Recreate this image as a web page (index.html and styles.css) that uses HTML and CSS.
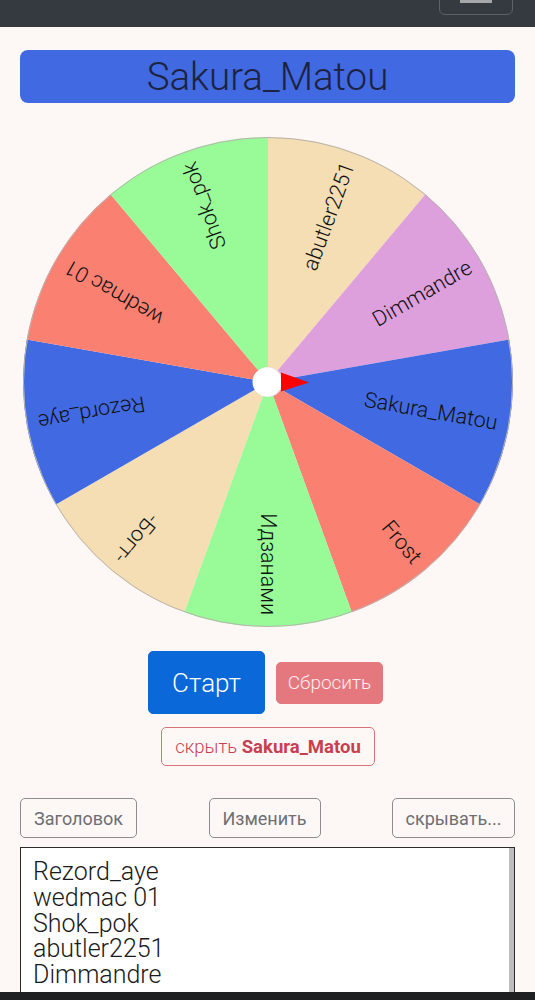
FILE: index.html
```html
<!DOCTYPE html>
<html lang="ru">
<head>
<meta charset="utf-8">
<title>Wheel</title>
<link rel="stylesheet" href="styles.css">
</head>
<body>
<nav class="navbar">
  <button class="toggler"><span class="toggler-icon"></span></button>
</nav>
<main class="container">
  <div class="winner">Sakura_Matou</div>
  <div class="wheel-wrap">
    <svg class="wheel" width="490" height="490" viewBox="0 0 490 490">
      <g transform="translate(245 245)">
        <g class="sectors">
          <path transform="rotate(0)" fill="#f5deb3" d="M0 0 L0 -245 A245 245 0 0 1 157.48 -187.68 Z"/>
          <path transform="rotate(40)" fill="#dda0dd" d="M0 0 L0 -245 A245 245 0 0 1 157.48 -187.68 Z"/>
          <path transform="rotate(80)" fill="#4169e1" d="M0 0 L0 -245 A245 245 0 0 1 157.48 -187.68 Z"/>
          <path transform="rotate(120)" fill="#fa8072" d="M0 0 L0 -245 A245 245 0 0 1 157.48 -187.68 Z"/>
          <path transform="rotate(160)" fill="#98fb98" d="M0 0 L0 -245 A245 245 0 0 1 157.48 -187.68 Z"/>
          <path transform="rotate(200)" fill="#f5deb3" d="M0 0 L0 -245 A245 245 0 0 1 157.48 -187.68 Z"/>
          <path transform="rotate(240)" fill="#4169e1" d="M0 0 L0 -245 A245 245 0 0 1 157.48 -187.68 Z"/>
          <path transform="rotate(280)" fill="#fa8072" d="M0 0 L0 -245 A245 245 0 0 1 157.48 -187.68 Z"/>
          <path transform="rotate(320)" fill="#98fb98" d="M0 0 L0 -245 A245 245 0 0 1 157.48 -187.68 Z"/>
        </g>
        <circle r="244.5" fill="none" stroke="#b9b4b0" stroke-width="1"/>
        <g class="labels">
          <text transform="rotate(-70)" x="233" y="0">abutler2251</text>
          <text transform="rotate(-30)" x="233" y="0">Dimmandre</text>
          <text transform="rotate(10)" x="233" y="0">Sakura_Matou</text>
          <text transform="rotate(50)" x="233" y="0">Frost</text>
          <text transform="rotate(90)" x="233" y="0">Идзанами</text>
          <text transform="rotate(130)" x="233" y="0">-Богт-</text>
          <text transform="rotate(170)" x="233" y="0">Rezord_aye</text>
          <text transform="rotate(210)" x="233" y="0">wedmac 01</text>
          <text transform="rotate(250)" x="233" y="0">Shok_pok</text>
        </g>
        <circle cx="0" cy="0" r="15" fill="#e9e6e4"/>
        <circle cx="-1" cy="0" r="14.5" fill="#ffffff"/>
        <polygon points="13,-9.5 41,0.5 13,9.5" fill="#ff0000"/>
      </g>
    </svg>
  </div>
  <div class="actions">
    <button class="btn btn-start">Старт</button>
    <button class="btn btn-reset">Сбросить</button>
  </div>
  <div class="hide-row">
    <button class="btn btn-hide">скрыть <b>Sakura_Matou</b></button>
  </div>
  <div class="tools">
    <button class="btn btn-tool">Заголовок</button>
    <button class="btn btn-tool">Изменить</button>
    <button class="btn btn-tool">скрывать...</button>
  </div>
  <div class="names">Rezord_aye
wedmac 01
Shok_pok
abutler2251
Dimmandre</div>
</main>
<div class="sysbar"></div>
</body>
</html>
```

FILE: styles.css
```css
* { box-sizing: border-box; }

html, body {
  margin: 0;
  padding: 0;
  background: #fdf8f6;
  font-family: Roboto, "Liberation Sans", sans-serif;
  font-weight: 300;
  color: #212529;
  overflow: hidden;
}

.navbar {
  height: 27px;
  background: #343a40;
  display: flex;
  justify-content: flex-end;
  align-items: flex-start;
  padding-right: 22px;
}

.toggler {
  width: 74px;
  height: 42px;
  margin-top: -27px;
  border: 1px solid #5b6166;
  border-radius: 6px;
  background: transparent;
  display: flex;
  align-items: flex-start;
  justify-content: center;
  padding: 26px 0 0 0;
}

.toggler-icon {
  display: block;
  width: 32px;
  height: 3px;
  background: #a5a7a9;
  box-shadow: 0 -9px 0 #a5a7a9, 0 -18px 0 #a5a7a9;
}

.container {
  padding: 0 20px;
  display: flex;
  flex-direction: column;
}

.winner {
  margin-top: 23px;
  height: 53px;
  border-radius: 8px;
  background: #4169e1;
  color: #1c2340;
  font-size: 38.5px;
  font-weight: 300;
  line-height: 53px;
  text-align: center;
}

.wheel-wrap {
  margin-top: 34px;
  display: flex;
  justify-content: center;
}

.wheel { display: block; }

.labels text {
  font-family: Roboto, "Liberation Sans", sans-serif;
  font-size: 21.5px;
  font-weight: 300;
  fill: #111111;
  text-anchor: end;
  dominant-baseline: central;
}

.btn {
  font-family: Roboto, "Liberation Sans", sans-serif;
  font-weight: 300;
  border-radius: 5px;
  cursor: pointer;
  padding: 0;
}

.actions {
  margin-top: 24px;
  display: flex;
  justify-content: center;
  align-items: center;
  gap: 11px;
  padding-right: 4px;
}

.btn-start {
  width: 117px;
  height: 63px;
  background: #0b68d8;
  border: 1px solid #0b68d8;
  color: #ffffff;
  font-size: 26px;
}

.btn-reset {
  width: 107px;
  height: 42px;
  background: #e5787f;
  border: 1px solid #e5787f;
  color: #fbeef0;
  font-size: 19px;
}

.hide-row {
  margin-top: 13px;
  display: flex;
  justify-content: center;
  padding-left: 1px;
}

.btn-hide {
  width: 214px;
  height: 39px;
  background: transparent;
  border: 1px solid #d8737c;
  color: #c8404e;
  font-size: 18.5px;
}

.btn-hide b { font-weight: 700; }

.tools {
  margin-top: 32px;
  display: flex;
  justify-content: space-between;
}

.btn-tool {
  height: 40px;
  background: transparent;
  border: 1px solid #8d8d8d;
  color: #6c6f73;
  font-size: 18px;
  font-weight: 400;
  padding: 0 8px;
}

.tools .btn-tool:nth-child(1) { width: 117px; }
.tools .btn-tool:nth-child(2) { width: 112px; }
.tools .btn-tool:nth-child(3) { width: 123px; }

.names {
  margin-top: 9px;
  height: 146px;
  background: #ffffff;
  border: 1px solid #2b2b2b;
  border-bottom: none;
  box-shadow: inset -5px 0 0 #bdbdbd;
  padding: 11px 12px 0;
  font-size: 25px;
  font-weight: 300;
  line-height: 25.8px;
  color: #1a1a1a;
  white-space: pre-line;
  overflow: hidden;
}

.sysbar {
  position: fixed;
  left: 0;
  right: 0;
  bottom: 0;
  height: 8px;
  background: #1f2022;
}
```
